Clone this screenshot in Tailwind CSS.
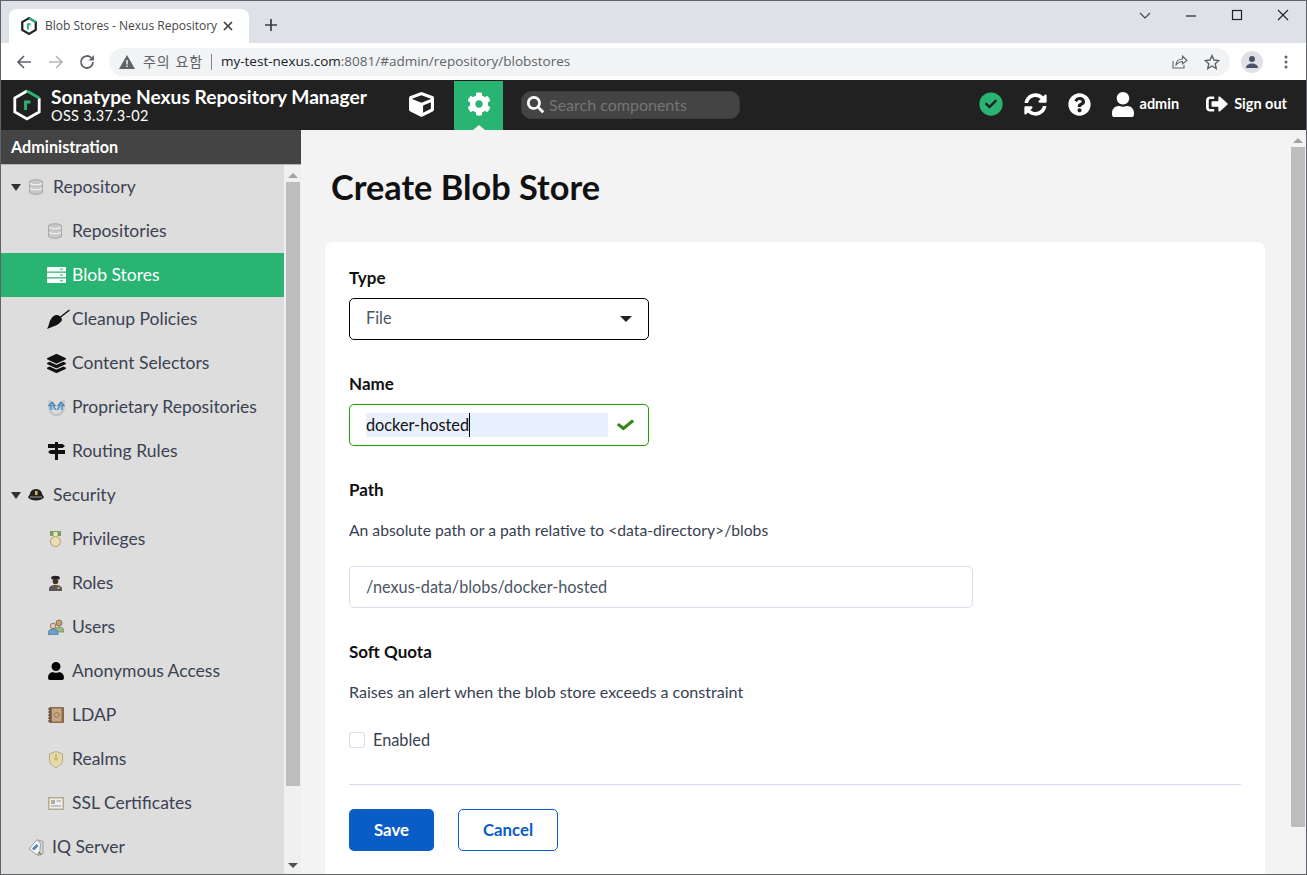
<!DOCTYPE html>
<html lang="ko">
<head>
<meta charset="utf-8">
<title>Blob Stores - Nexus Repository Manager</title>
<script src="https://cdn.jsdelivr.net/npm/@tailwindcss/browser@4"></script>
</head>
<body class="m-0 overflow-hidden bg-white">
<div class="w-[1307px] h-[875px] overflow-hidden flex flex-col border border-[#5f6368] font-['Lato',sans-serif]">

  <!-- Tab strip -->
  <div class="h-[42px] shrink-0 bg-[#dee1e6] flex font-['Open_Sans',sans-serif] relative">
    <div class="ml-2 mt-2 w-[240px] h-[34px] bg-white rounded-t-lg flex items-center pl-3 pr-2">
      <svg class="w-4 h-[18px] shrink-0" viewBox="0 0 28 32" fill="none"><path d="M14 2L2 9v14l12 7 12-7V9z" stroke="#202124" stroke-width="4"/><path d="M14 2l12 7" stroke="#29b473" stroke-width="4"/><path d="M12 22v-9h5" stroke="#29b473" stroke-width="3.5"/></svg>
      <span class="ml-[8px] w-[172px] whitespace-nowrap text-[12px] text-[#45474a]">Blob Stores - Nexus Repository</span>
      <svg class="ml-[6px] w-[10px] h-[10px] shrink-0" viewBox="0 0 10 10"><path d="M1 1l8 8M9 1L1 9" stroke="#3c4043" stroke-width="1.7"/></svg>
    </div>
    <svg class="ml-[16px] mt-[18px] w-[12px] h-[12px]" viewBox="0 0 12 12"><path d="M6 0v12M0 6h12" stroke="#3c4043" stroke-width="1.7"/></svg>
    <div class="ml-auto flex items-start pt-[9px] pr-[17px] gap-[34px]">
      <svg class="w-[12px] h-[12px]" viewBox="0 0 12 12" fill="none"><path d="M1 3l5 5 5-5" stroke="#3c4043" stroke-width="1.1"/></svg>
      <svg class="w-[12px] h-[12px]" viewBox="0 0 12 12"><path d="M1 6h10" stroke="#202124" stroke-width="1.200"/></svg>
      <svg class="w-[12px] h-[12px] -mt-[1px]" viewBox="0 0 12 12" fill="none"><rect x="1.500" y="1.500" width="9" height="9" stroke="#202124" stroke-width="1.200"/></svg>
      <svg class="w-[12px] h-[12px] -mt-[1px]" viewBox="0 0 12 12" fill="none"><path d="M1 1l10 10M11 1L1 11" stroke="#202124" stroke-width="1.100"/></svg>
    </div>
  </div>

  <!-- Browser toolbar -->
  <div class="h-[37px] shrink-0 bg-white flex items-center font-['Open_Sans',sans-serif] relative">
    <svg class="ml-[15px] w-4 h-4" viewBox="0 0 16 16" fill="none"><path d="M15 8H2M8 2L2 8l6 6" stroke="#5f6368" stroke-width="1.700"/></svg>
    <svg class="ml-[16px] w-4 h-4" viewBox="0 0 16 16" fill="none"><path d="M1 8h13M8 2l6 6-6 6" stroke="#b4b6b9" stroke-width="1.700"/></svg>
    <svg class="ml-[15px] w-4 h-4" viewBox="0 0 16 16" fill="none"><path d="M14 8a6 6 0 1 1-1.800-4.300" stroke="#5f6368" stroke-width="1.800"/><path d="M15 1v5.500H9.500z" fill="#5f6368"/></svg>
    <div class="ml-[14px] w-[1121px] h-[28px] rounded-full bg-[#f1f3f4] flex items-center pl-[10px]">
      <svg class="w-4 h-[14px] shrink-0" viewBox="0 0 16 14"><path d="M8 0l8 14H0z" fill="#5f6368"/><path d="M8 5v4.500M8 10.500v1.500" stroke="#f1f3f4" stroke-width="1.500"/></svg>
      <span class="ml-[8px] text-[14px] text-[#5f6368] font-['Noto_Sans_CJK_KR',sans-serif] whitespace-nowrap tracking-[0.9px]">주의 요함</span>
      <span class="ml-[8px] w-px h-[16px] bg-[#80868b]"></span>
      <span class="ml-[9px] text-[13.500px] text-[#202124] whitespace-nowrap">my-test-nexus.com<span class="text-[#5f6368]">:8081/#admin/repository/blobstores</span></span>
      <svg class="ml-auto w-[16px] h-[15px]" viewBox="0 0 16 15" fill="none"><path d="M1 7v7h11v-3" stroke="#5f6368" stroke-width="1.100"/><path d="M4 11c0-4 3-6 6.500-6V2L15 6.500 10.500 10V7.500C8 7.500 6 8.500 4 11z" stroke="#5f6368" stroke-width="1.100"/></svg>
      <svg class="ml-[16px] mr-[10px] w-[16px] h-[16px]" viewBox="0 0 16 16" fill="none"><path d="M8 1.500l2 4.500 4.800.5-3.600 3.200 1 4.800L8 12l-4.200 2.500 1-4.800L1.200 6.500 6 6z" stroke="#5f6368" stroke-width="1.400"/></svg>
    </div>
    <div class="ml-[11px] w-[22px] h-[22px] rounded-full bg-[#dee1e6] flex items-center justify-center">
      <svg class="w-[14px] h-[14px]" viewBox="0 0 14 14" fill="#4a5068"><circle cx="7" cy="4" r="3"/><path d="M1 13c0-3 3-4.500 6-4.500s6 1.500 6 4.500z"/></svg>
    </div>
    <svg class="ml-[21px] w-[4px] h-[14px]" viewBox="0 0 4 14" fill="#5f6368"><circle cx="2" cy="2" r="1.500"/><circle cx="2" cy="7" r="1.500"/><circle cx="2" cy="12" r="1.500"/></svg>
  </div>

  <!-- Nexus header -->
  <div class="h-[50px] shrink-0 bg-[#212121] flex items-stretch text-white">
    <svg class="ml-[12px] mt-[9px] w-[28px] h-[32px] shrink-0" viewBox="0 0 28 32" fill="none"><path d="M14 2L1.800 9v14L14 30l12.200-7V9" stroke="#fff" stroke-width="2.800"/><path d="M14 2l12.200 7" stroke="#29b473" stroke-width="2.800"/><path d="M12.500 21v-8h5" stroke="#29b473" stroke-width="2.800"/></svg>
    <div class="ml-[10px] w-[346px] flex flex-col pt-[5px] shrink-0">
      <span class="text-[19.200px] leading-[24px] font-bold whitespace-nowrap">Sonatype Nexus Repository Manager</span>
      <span class="text-[14.500px] leading-[14px] whitespace-nowrap tracking-[0.3px]">OSS 3.37.3-02</span>
    </div>
    <div class="w-[49px] flex items-center justify-center pb-[2px]">
      <svg class="w-[25px] h-[25px]" viewBox="0 0 512 512" fill="#fff"><path d="M239.100 6.300l-208 78c-18.700 7-31.100 25-31.100 45v225.100c0 18.200 10.300 34.800 26.500 42.900l208 104c13.500 6.800 29.400 6.800 42.900 0l208-104c16.300-8.100 26.500-24.800 26.500-42.900V129.300c0-20-12.400-37.900-31.100-44.900l-208-78C262 2.200 250 2.200 239.100 6.300zM256 68.400l192 72v1.100l-192 78-192-78v-1.100l192-72zm32 356V275.500l160-65v133.900l-160 80z"/></svg>
    </div>
    <div class="ml-[8px] w-[49px] mt-[1px] bg-[#29b473] flex items-center justify-center relative pb-[3px]">
      <svg class="w-[24px] h-[24px]" viewBox="0 0 512 512" fill="#fff"><path d="M487.400 315.700l-42.600-24.600c4.300-23.200 4.300-47 0-70.200l42.600-24.600c4.900-2.800 7.100-8.600 5.500-14-11.100-35.600-30-67.800-54.700-94.600-3.800-4.100-10-5.100-14.800-2.300L380.800 110c-17.900-15.400-38.500-27.300-60.800-35.100V25.800c0-5.600-3.900-10.500-9.400-11.700-36.700-8.200-74.300-7.800-109.200 0-5.500 1.200-9.400 6.100-9.400 11.700V75c-22.200 7.900-42.800 19.800-60.800 35.100L88.700 85.500c-4.900-2.800-11-1.900-14.800 2.300-24.700 26.700-43.600 58.900-54.700 94.600-1.700 5.400.6 11.200 5.500 14L67.300 221c-4.300 23.200-4.300 47 0 70.200l-42.600 24.600c-4.900 2.800-7.100 8.600-5.500 14 11.100 35.600 30 67.800 54.700 94.600 3.800 4.100 10 5.100 14.800 2.300l42.600-24.600c17.900 15.400 38.500 27.300 60.800 35.100v49.200c0 5.600 3.900 10.500 9.400 11.700 36.700 8.200 74.300 7.800 109.200 0 5.500-1.200 9.400-6.100 9.400-11.700v-49.200c22.200-7.900 42.800-19.800 60.800-35.100l42.600 24.600c4.900 2.800 11 1.900 14.800-2.300 24.700-26.700 43.600-58.900 54.700-94.600 1.500-5.500-.7-11.300-5.600-14.100zM256 336c-44.100 0-80-35.900-80-80s35.900-80 80-80 80 35.900 80 80-35.900 80-80 80z"/></svg>
      <span class="absolute bottom-0 left-1/2 -translate-x-1/2 w-0 h-0 border-x-[6px] border-x-transparent border-b-[5px] border-b-[#f3f3f3]"></span>
    </div>
    <div class="ml-[18px] my-[11px] w-[219px] rounded-[10px] bg-[#444] border border-[#3c3c3c] flex items-center pl-[5px] pb-[1px]">
      <svg class="w-[17px] h-[17px] shrink-0" viewBox="0 0 512 512" fill="#fff"><path d="M505 442.700L405.300 343c-4.500-4.500-10.600-7-17-7H372c27.600-35.300 44-79.700 44-128C416 93.100 322.900 0 208 0S0 93.100 0 208s93.100 208 208 208c48.300 0 92.700-16.400 128-44v16.300c0 6.400 2.500 12.500 7 17l99.700 99.700c9.400 9.400 24.600 9.400 33.900 0l28.300-28.300c9.400-9.400 9.400-24.600.1-34zM208 336c-70.700 0-128-57.200-128-128 0-70.700 57.200-128 128-128 70.700 0 128 57.200 128 128 0 70.700-57.200 128-128 128z"/></svg>
      <span class="ml-[5px] text-[16px] text-[#757575] whitespace-nowrap">Search components</span>
    </div>
    <div class="ml-auto flex items-center pr-[19px] pb-[2px]">
      <svg class="w-[24px] h-[24px]" viewBox="0 0 512 512"><circle cx="256" cy="256" r="248" fill="#29b473"/><path fill="#212121" d="M227.314 387.314l184-184c6.248-6.248 6.248-16.379 0-22.627l-22.627-22.627c-6.248-6.249-16.379-6.249-22.628 0L216 308.118l-70.059-70.059c-6.248-6.248-16.379-6.248-22.628 0l-22.627 22.627c-6.248 6.248-6.248 16.379 0 22.627l104 104c6.249 6.250 16.379 6.250 22.628.001z" transform="translate(51,38) scale(.8)"/></svg>
      <svg class="ml-[21px] w-[23px] h-[23px]" viewBox="0 0 512 512" fill="#fff"><path d="M370.720 133.280C339.458 104.008 298.888 87.962 255.848 88c-77.458.068-144.328 53.178-162.791 126.850-1.344 5.363-6.122 9.150-11.651 9.150H24.103c-7.498 0-13.194-6.807-11.807-14.176C33.933 94.924 134.813 8 256 8c66.448 0 126.791 26.136 171.315 68.685L463.030 40.970C478.149 25.851 504 36.559 504 57.941V192c0 13.255-10.745 24-24 24H345.941c-21.382 0-32.090-25.851-16.971-40.971l41.750-41.749zM32 296h134.059c21.382 0 32.090 25.851 16.971 40.971l-41.750 41.750c31.262 29.273 71.835 45.319 114.876 45.280 77.418-.070 144.315-53.144 162.787-126.849 1.344-5.363 6.122-9.150 11.651-9.150h57.304c7.498 0 13.194 6.807 11.807 14.176C478.067 417.076 377.187 504 256 504c-66.448 0-126.791-26.136-171.315-68.685L48.970 471.030C33.851 486.149 8 475.441 8 454.059V320c0-13.255 10.745-24 24-24z"/></svg>
      <svg class="ml-[21px] w-[23px] h-[23px]" viewBox="0 0 512 512" fill="#fff"><path d="M504 256c0 136.997-111.043 248-248 248S8 392.997 8 256C8 119.083 119.043 8 256 8s248 111.083 248 248zM262.655 90c-54.497 0-89.255 22.957-116.549 63.758-3.536 5.286-2.353 12.415 2.715 16.258l34.699 26.310c5.205 3.947 12.621 3.008 16.665-2.122 17.864-22.658 30.113-35.797 57.303-35.797 20.429 0 45.698 13.148 45.698 32.958 0 14.976-12.363 22.667-32.534 33.976C247.128 238.528 216 254.941 216 296v4c0 6.627 5.373 12 12 12h56c6.627 0 12-5.373 12-12v-1.333c0-28.462 83.186-29.647 83.186-106.667 0-58.002-60.165-102-116.531-102zM256 338c-25.365 0-46 20.635-46 46 0 25.364 20.635 46 46 46s46-20.636 46-46c0-25.365-20.635-46-46-46z"/></svg>
      <svg class="ml-[21px] w-[22px] h-[25px]" viewBox="0 0 448 512" fill="#fff"><path d="M224 256c70.700 0 128-57.300 128-128S294.700 0 224 0 96 57.300 96 128s57.300 128 128 128zm89.600 32h-16.700c-22.200 10.200-46.900 16-72.900 16s-50.600-5.800-72.900-16h-16.700C60.200 288 0 348.200 0 422.400V464c0 26.500 21.500 48 48 48h352c26.500 0 48-21.500 48-48v-41.600c0-74.200-60.200-134.400-134.400-134.400z"/></svg>
      <span class="ml-[6px] text-[14.500px] font-bold">admin</span>
      <svg class="ml-[27px] w-[22px] h-[20px]" viewBox="0 0 512 512" preserveAspectRatio="none" fill="#fff"><path d="M497 273L329 441c-15 15-41 4.500-41-17v-96H152c-13.300 0-24-10.700-24-24v-96c0-13.300 10.700-24 24-24h136V88c0-21.400 25.900-32 41-17l168 168c9.300 9.400 9.300 24.600 0 34zM192 436v-40c0-6.600-5.400-12-12-12H96c-17.700 0-32-14.300-32-32V160c0-17.700 14.300-32 32-32h84c6.600 0 12-5.400 12-12V76c0-6.600-5.400-12-12-12H96c-53 0-96 43-96 96v192c0 53 43 96 96 96h84c6.600 0 12-5.400 12-12z"/></svg>
      <span class="ml-[6px] text-[14.500px] font-bold whitespace-nowrap">Sign out</span>
    </div>
  </div>

  <!-- Body -->
  <div class="flex-1 min-h-0 flex">
    <!-- Sidebar -->
    <aside class="w-[300px] shrink-0 flex flex-col bg-[#f0f0f0]">
      <div class="h-[35px] shrink-0 bg-[#444] flex items-center pl-[10px] text-[16.200px] font-bold text-white border-b border-[#b5b5b5]">Administration</div>
      <div class="flex-1 min-h-0 flex">
        <nav class="w-[283px] shrink-0 bg-[#dddddd] text-[17.500px] text-[#3b4252] overflow-hidden">
          <div class="h-[44px] flex items-center">
            <span class="ml-[10px] w-0 h-0 border-x-[5px] border-x-transparent border-t-[7px] border-t-[#333]"></span>
            <svg class="ml-[8px] w-[14px] h-[16px]" viewBox="0 0 14 16"><path d="M.5 3c0-3 13-3 13 0v10c0 3-13 3-13 0z" fill="#c8c8c8" stroke="#a6a6a6"/><path d="M1 4.500q6 2.500 12 0M1 9.500q6 2.500 12 0" stroke="#f5f5f5" stroke-width="1.200" fill="none"/></svg>
            <span class="ml-[10px]">Repository</span>
          </div>
          <div class="h-[44px] flex items-center">
            <svg class="ml-[47px] w-[14px] h-[16px]" viewBox="0 0 14 16"><path d="M.5 3c0-3 13-3 13 0v10c0 3-13 3-13 0z" fill="#c8c8c8" stroke="#a6a6a6"/><path d="M1 4.500q6 2.500 12 0M1 9.500q6 2.500 12 0" stroke="#f5f5f5" stroke-width="1.200" fill="none"/></svg>
            <span class="ml-[10px]">Repositories</span>
          </div>
          <div class="h-[44px] flex items-center bg-[#29b473] text-white">
            <svg class="ml-[46px] w-[19px] h-[16px]" viewBox="0 0 19 16"><path fill="#fff" d="M1 0h17a1 1 0 0 1 1 1v3.500H0V1a1 1 0 0 1 1-1zM0 5.800h19v4.500H0zM0 11.600h19V15a1 1 0 0 1-1 1H1a1 1 0 0 1-1-1z"/><path stroke="#29b473" d="M13 2.200h3M13 8h3M13 13.800h3"/></svg>
            <span class="ml-[6px]">Blob Stores</span>
          </div>
          <div class="h-[44px] flex items-center">
            <svg class="ml-[46px] w-[23px] h-[20px]" viewBox="0 0 23 20" fill="#111"><path d="M22.500 1L11 10" stroke="#111" stroke-width="1.500"/><path d="M9 6c3 0 6 2 6 5-2 4-7 6-10 7l-5 2c1-2 1.500-3 2-5 1-4 3-8 7-9z"/></svg>
            <span class="ml-[2px]">Cleanup Policies</span>
          </div>
          <div class="h-[44px] flex items-center">
            <svg class="ml-[46px] w-[19px] h-[19px]" viewBox="0 0 512 512" fill="#111"><path d="M12.410 148.020l232.940 105.670c6.800 3.090 14.490 3.090 21.290 0l232.940-105.670c16.550-7.510 16.550-32.520 0-40.030L266.650 2.310a25.607 25.607 0 0 0-21.290 0L12.410 107.980c-16.550 7.510-16.550 32.530 0 40.040zm487.180 88.280l-58.090-26.330-161.640 73.270c-7.560 3.430-15.590 5.170-23.860 5.170s-16.290-1.740-23.860-5.170L70.510 209.970l-58.100 26.330c-16.550 7.500-16.550 32.500 0 40l232.940 105.590c6.800 3.080 14.490 3.080 21.290 0L499.590 276.300c16.550-7.500 16.550-32.500 0-40zm0 127.800l-57.870-26.230-161.860 73.370c-7.560 3.430-15.590 5.170-23.860 5.170s-16.290-1.740-23.860-5.170L70.290 337.870 12.410 364.100c-16.550 7.500-16.550 32.500 0 40l232.940 105.590c6.800 3.080 14.490 3.080 21.290 0L499.590 404.100c16.550-7.500 16.550-32.500 0-40z"/></svg>
            <span class="ml-[6px]">Content Selectors</span>
          </div>
          <div class="h-[44px] flex items-center">
            <svg class="ml-[47px] w-[17px] h-[17px]" viewBox="0 0 17 17" fill="none"><path d="M1.500 1v8c0 4 3 7 7 7s7-3 7-7V1" stroke="#c3c6ca" stroke-width="2.500"/><path d="M3 11V6.500H1L4 3l3 3.500H5L8 11M14 11V6.500h2L13 3l-3 3.500h2L9 11" stroke="#4f87b5" stroke-width="1.300" fill="#a9cbe6"/></svg>
            <span class="ml-[7px]">Proprietary Repositories</span>
          </div>
          <div class="h-[44px] flex items-center">
            <svg class="ml-[47px] w-[17px] h-[18px]" viewBox="0 0 17 18" fill="#111"><rect x="7" y="0" width="3" height="18"/><path d="M0 2h14.500l2.500 2-2.500 2H0zM2.500 8H17v4H2.500L0 10z"/></svg>
            <span class="ml-[7px]">Routing Rules</span>
          </div>
          <div class="h-[44px] flex items-center">
            <span class="ml-[10px] w-0 h-0 border-x-[5px] border-x-transparent border-t-[7px] border-t-[#333]"></span>
            <svg class="ml-[7px] w-[16px] h-[12px]" viewBox="0 0 16 12"><path d="M8 0c4 0 6 3 6 5l2 3c-1 2-4 3.500-8 3.500S1 10 0 8l2-3c0-2 2-5 6-5z" fill="#222"/><rect x="7" y="2" width="2.500" height="4" fill="#d8b24a"/><path d="M2 8h12" stroke="#9a9a9a"/></svg>
            <span class="ml-[9px]">Security</span>
          </div>
          <div class="h-[44px] flex items-center">
            <svg class="ml-[49px] w-[11px] h-[16px]" viewBox="0 0 11 16"><rect x="0" y="0" width="11" height="5" fill="#7f9e5c"/><rect x="3.500" y="1" width="4" height="4" fill="#dfe8c9"/><circle cx="5.500" cy="10.500" r="5" fill="#eadfb4" stroke="#b29a5c"/></svg>
            <span class="ml-[11px]">Privileges</span>
          </div>
          <div class="h-[44px] flex items-center">
            <svg class="ml-[48px] w-[13px] h-[16px]" viewBox="0 0 13 16"><path d="M2 3c0-3 9-3 9 0l-1 1.500H3z" fill="#222"/><circle cx="6.500" cy="6.500" r="2.800" fill="#4a3022"/><path d="M0 16v-2c0-3 3-4 6.500-4s6.500 1 6.500 4v2z" fill="#585858"/><rect x="8.500" y="12" width="2" height="2" fill="#d8b24a"/></svg>
            <span class="ml-[10px]">Roles</span>
          </div>
          <div class="h-[44px] flex items-center">
            <svg class="ml-[47px] w-[16px] h-[16px]" viewBox="0 0 16 16"><circle cx="11" cy="4" r="3" fill="#c99d78" stroke="#6d5138" stroke-width=".7"/><path d="M7 13V11c0-2 2-3 4-3s5 1 5 3v2z" fill="#9ab882" stroke="#5e7a4a" stroke-width=".6"/><circle cx="5" cy="7" r="2.700" fill="#e6cfb2" stroke="#6d5138" stroke-width=".7"/><path d="M0 16v-2c0-2.500 2-4 5-4s5 1.500 5 4v2z" fill="#6f9fcb" stroke="#3b6c99" stroke-width=".6"/></svg>
            <span class="ml-[8px]">Users</span>
          </div>
          <div class="h-[44px] flex items-center">
            <svg class="ml-[47px] w-[16px] h-[18px]" viewBox="0 0 448 512" fill="#000"><path d="M224 256c70.700 0 128-57.300 128-128S294.700 0 224 0 96 57.300 96 128s57.300 128 128 128zm89.600 32h-16.700c-22.200 10.200-46.900 16-72.900 16s-50.600-5.800-72.900-16h-16.700C60.200 288 0 348.200 0 422.400V464c0 26.500 21.500 48 48 48h352c26.500 0 48-21.500 48-48v-41.600c0-74.200-60.200-134.400-134.400-134.400z"/></svg>
            <span class="ml-[8px]">Anonymous Access</span>
          </div>
          <div class="h-[44px] flex items-center">
            <svg class="ml-[47px] w-[16px] h-[16px]" viewBox="0 0 16 16"><rect x="1" y="0" width="15" height="16" rx="1" fill="#8a6a48"/><rect x="4" y="1.500" width="9.500" height="13" fill="#c8a882"/><circle cx="8.700" cy="8" r="2.500" fill="none" stroke="#9a7a58"/><path d="M0 2h3M0 5h3M0 8h3M0 11h3M0 14h3" stroke="#444"/></svg>
            <span class="ml-[8px]">LDAP</span>
          </div>
          <div class="h-[44px] flex items-center">
            <svg class="ml-[48px] w-[14px] h-[17px]" viewBox="0 0 14 17"><path d="M7 .5l6.500 2.500v6c0 4-3.500 6.500-6.500 7.500-3-1-6.500-3.500-6.500-7.500V3z" fill="#e6daa6" stroke="#b3ab84"/><path d="M7 3v5M5 7l2 2.500L9 7" stroke="#b3a268" fill="none"/></svg>
            <span class="ml-[9px]">Realms</span>
          </div>
          <div class="h-[44px] flex items-center">
            <svg class="ml-[47px] w-[16px] h-[13px]" viewBox="0 0 16 13"><rect x=".75" y=".75" width="14.500" height="11.500" fill="#f0efea" stroke="#b8a88e" stroke-width="1.500"/><rect x="3" y="3" width="4" height="4" fill="#b3ab9e"/><path d="M8.500 4h4.500M3 9h10" stroke="#7d9cb8"/></svg>
            <span class="ml-[8px]">SSL Certificates</span>
          </div>
          <div class="h-[44px] flex items-center">
            <svg class="ml-[27px] w-[16px] h-[17px]" viewBox="0 0 16 17"><path d="M10 1l5 1.500v12l-5 2z" fill="#d8d8d8" stroke="#9a9a9a"/><path d="M9 .5l3.500 4-.5 7-3 4.500L1 10z" fill="#f7f7f7" stroke="#9a9a9a"/><path d="M4 9.500L8.500 5l2 2L6 11.500z" fill="#4f87b5"/><path d="M11 13l2 3" stroke="#6f9a4c" stroke-width="1.500"/></svg>
            <span class="ml-[8px]">IQ Server</span>
          </div>
        </nav>
        <div class="flex-1 flex flex-col items-center px-[1px]">
          <span class="mt-[8px] w-0 h-0 border-x-[5px] border-x-transparent border-b-[5px] border-b-[#a3a3a3]"></span>
          <div class="mt-[4px] w-[14px] h-[604px] bg-[#bdbdbd]"></div>
          <span class="mt-auto mb-[6px] w-0 h-0 border-x-[5px] border-x-transparent border-t-[5px] border-t-[#505050]"></span>
        </div>
      </div>
    </aside>

    <!-- Main -->
    <main class="flex-1 min-w-0 bg-[#f3f3f3] flex">
      <div class="w-[990px] shrink-0 overflow-hidden pl-[24px]">
        <h1 class="mt-[35px] ml-[6px] text-[34.300px] leading-[44px] font-bold text-[#111] whitespace-nowrap">Create Blob Store</h1>
        <section class="mt-[33px] w-[940px] h-[640px] bg-white rounded-[8px] px-[24px] text-[#374151] text-[16.300px]">
          <div class="pt-[24px] text-[17px] leading-[24px] font-bold text-[#111]">Type</div>
          <div class="mt-[8px] w-[300px] h-[42px] border border-black rounded-[5px] flex items-center pl-[16px] pr-[16px] pb-[2px] text-[#4b5563]">
            <span>File</span>
            <span class="ml-auto mt-[2px] w-0 h-0 border-x-[6px] border-x-transparent border-t-[6px] border-t-[#222]"></span>
          </div>
          <div class="mt-[32px] text-[17px] leading-[24px] font-bold text-[#111]">Name</div>
          <div class="mt-[8px] w-[300px] h-[42px] border border-[#2f9a10] rounded-[5px] flex items-center pl-[16px] pr-[14px] shadow-[0_0_2px_#b8e6b0]">
            <div class="w-[242px] h-[24px] bg-[#e8f0fe] flex items-center text-[#111]"><span class="border-r border-black leading-[24px]">docker-hosted</span></div>
            <svg class="ml-auto w-[17px] h-[14px]" viewBox="0 0 512 512" preserveAspectRatio="none" fill="#2f8a15"><path d="M173.898 439.404l-166.400-166.400c-9.997-9.997-9.997-26.206 0-36.204l36.203-36.204c9.997-9.998 26.207-9.998 36.204 0L192 312.690 432.095 72.596c9.997-9.997 26.207-9.997 36.204 0l36.203 36.204c9.997 9.997 9.997 26.206 0 36.204l-294.400 294.401c-9.998 9.997-26.207 9.997-36.204-.001z"/></svg>
          </div>
          <div class="mt-[32px] text-[17px] leading-[24px] font-bold text-[#111]">Path</div>
          <p class="mt-[16px] text-[15.700px] leading-[24px] text-[#374151]">An absolute path or a path relative to &lt;data-directory&gt;/blobs</p>
          <div class="mt-[24px] w-[624px] h-[42px] border border-[#d8dee9] rounded-[5px] flex items-center pl-[16px] text-[#4b5563]">/nexus-data/blobs/docker-hosted</div>
          <div class="mt-[32px] text-[17px] leading-[24px] font-bold text-[#111]">Soft Quota</div>
          <p class="mt-[16px] text-[16.100px] leading-[24px] text-[#374151]">Raises an alert when the blob store exceeds a constraint</p>
          <div class="mt-[24px] flex items-center h-[24px]">
            <span class="w-[16px] h-[16px] border border-[#d8dcec] rounded-[2px] bg-white"></span>
            <span class="ml-[8px]">Enabled</span>
          </div>
          <div class="mt-[32px] border-t border-[#d5dcf0]"></div>
          <div class="mt-[24px] flex gap-[24px]">
            <button class="w-[85px] h-[42px] rounded-[5px] bg-[#0a5cc7] text-white font-bold text-[16.800px]">Save</button>
            <button class="w-[100px] h-[42px] rounded-[5px] bg-white border border-[#0a5cc7] text-[#0a5cc7] font-bold text-[16.800px]">Cancel</button>
          </div>
        </section>
      </div>
      <div class="flex-1 flex flex-col items-center pr-[1px]">
        <span class="mt-[8px] w-0 h-0 border-x-[5px] border-x-transparent border-b-[5px] border-b-[#a3a3a3]"></span>
        <div class="mt-[4px] w-[14px] h-[680px] bg-[#bdbdbd]"></div>
      </div>
    </main>
  </div>
</div>
</body>
</html>
